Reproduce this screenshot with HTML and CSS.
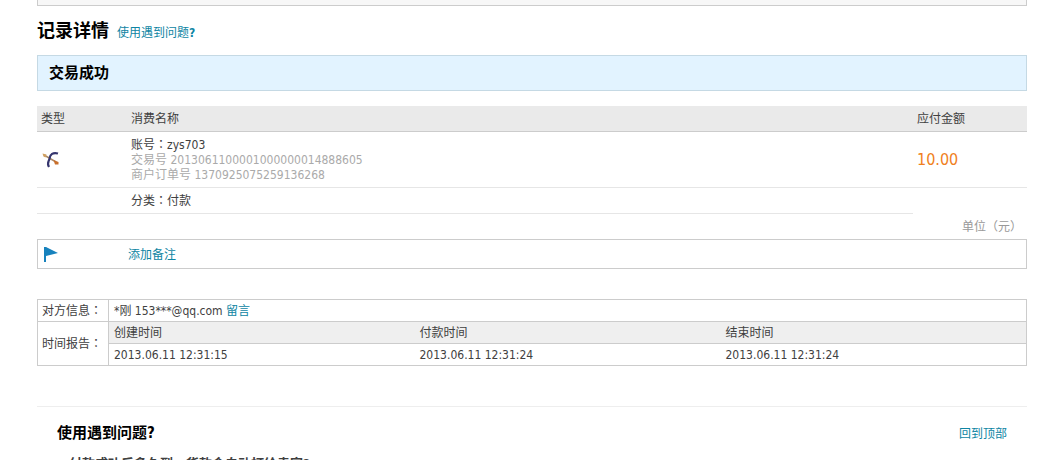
FILE: index.html
```html
<!DOCTYPE html>
<html lang="zh-CN">
<head>
    <meta charset="UTF-8">
    <meta name="viewport" content="width=device-width, initial-scale=1.0">
    <title>记录详情</title>
    <link rel="stylesheet" href="styles.css">
</head>
<body>

    <div class="container" id="top">
        <div class="top-bar"></div>

        <div class="title">
            <h1>记录详情</h1>
            <a href="#help">使用遇到问题<b>?</b></a>
        </div>

        <h2 class="status">交易成功</h2>

        <table class="detail">
            <thead>
                <tr>
                    <th class="col-type">类型</th>
                    <th>消费名称</th>
                    <th class="col-amount">应付金额</th>
                </tr>
            </thead>
            <tbody>
                <tr class="item">
                    <td>
                        <svg class="icon-type" width="20" height="20" viewBox="0 0 20 20">
                            <path d="M3 4l12 7" stroke="#a98a6a" stroke-width="1.500"/>
                            <path d="M1.500 2.500l4 1-1 3-2-1z" fill="#d0a060"/>
                            <path d="M12.500 9l5 2v2.500h-3.500z" fill="#c9702c"/>
                            <path d="M17 2.500C12 1 9 3.500 8.500 7.500 8 10.500 5.500 12 8 16" fill="none" stroke="#35356e" stroke-width="2.200"/>
                        </svg>
                    </td>
                    <td>
                        <p>账号<span class="colon" lang="zh-TW">：</span>zys703</p>
                        <p class="gray">交易号 2013061100001000000014888605</p>
                        <p class="gray">商户订单号 1370925075259136268</p>
                    </td>
                    <td class="amount">10.00</td>
                </tr>
                <tr class="category">
                    <td></td>
                    <td>分类<span class="colon" lang="zh-TW">：</span>付款</td>
                    <td class="blank"></td>
                </tr>
            </tbody>
        </table>
        <p class="unit">单位<span class="colon" lang="zh-TW">（</span>元<span class="colon" lang="zh-TW">）</span></p>

        <div class="memo">
            <svg width="14" height="16" viewBox="0 0 14 16">
                <path d="M0 1h2l12 6-12 3v6H0z" fill="#1782bd"/>
            </svg>
            <a href="#memo">添加备注</a>
        </div>

        <table class="info">
            <tr>
                <th class="label">对方信息<span class="colon" lang="zh-TW">：</span></th>
                <td colspan="3">*刚 153***@qq.com <a href="#message">留言</a></td>
            </tr>
            <tr class="time-head">
                <th class="label" rowspan="2">时间报告<span class="colon" lang="zh-TW">：</span></th>
                <th>创建时间</th>
                <th>付款时间</th>
                <th>结束时间</th>
            </tr>
            <tr>
                <td>2013.06.11 12:31:15</td>
                <td>2013.06.11 12:31:24</td>
                <td>2013.06.11 12:31:24</td>
            </tr>
        </table>

        <div class="help" id="help">
            <div class="help-head">
                <h2>使用遇到问题?</h2>
                <a href="#top">回到顶部</a>
            </div>
            <h3>付款成功后多久到，货款会自动打给卖家?</h3>
        </div>
    </div>

</body>
</html>
```
FILE: styles.css
```css
body {
    margin: 0;
    font-family: "DejaVu Sans Condensed", "Noto Sans CJK SC", sans-serif;
    font-size: 12px;
    line-height: 15px;
    color: #404040;
    background: #fff;
}
h1, h2, h3, p {
    margin: 0;
}
a {
    color: #0e85a3;
    text-decoration: none;
}
table {
    width: 100%;
    border-collapse: collapse;
    table-layout: fixed;
}
th {
    font-weight: normal;
    text-align: left;
}
/* full-width punctuation centred in its box */
.colon {
    font-family: "Noto Sans CJK TC", sans-serif;
    line-height: 1;
}
.container {
    margin: 0 34px 0 37px;
}
.top-bar {
    height: 5px;
    background: #f7f7f7;
    border: 1px solid #ccc;
    border-top: none;
}
.title {
    display: flex;
    align-items: center;
    gap: 8px;
    height: 49px;
}
.title h1 {
    font-size: 18px;
    line-height: 24px;
    color: #000;
}
.title a {
    padding-top: 6px;
}
.status {
    padding: 7px 11px;
    border: 1px solid #c5d9e4;
    background: #e2f3ff;
    font-size: 15px;
    line-height: 20px;
    color: #000;
}
.detail {
    margin-top: 15px;
}
.detail th {
    height: 23px;
    padding: 2px 4px 0;
    background: #eaeaea;
    border-bottom: 1px solid #ccc;
}
.detail td {
    padding: 6px 4px 4px;
    border-bottom: 1px solid #e6e6e6;
}
.detail .col-type {
    width: 82px;
}
.detail .col-amount {
    width: 106px;
}
.detail .blank {
    border-bottom: none;
}
.icon-type {
    display: block;
}
.gray {
    color: #aaa;
}
.detail .amount {
    padding: 5px 4px;
    font-size: 16px;
    color: #f08020;
}
.unit {
    padding: 6px 5px 4px 0;
    text-align: right;
    color: #999;
}
.memo {
    display: flex;
    align-items: center;
    gap: 70px;
    height: 28px;
    padding-left: 6px;
    border: 1px solid #ccc;
}
.memo a {
    padding-top: 2px;
}
.info {
    margin-top: 30px;
    border: 1px solid #ccc;
}
.info th, .info td {
    height: 20px;
    padding: 1px 5px 0;
    border-top: 1px solid #ccc;
    border-bottom: 1px solid #ccc;
}
.info .label {
    width: 62px;
    padding: 1px 4px 0;
    border-right: 1px solid #ccc;
}
.time-head th {
    background: #efefef;
}
.time-head .label {
    background: #fff;
}
.help {
    margin-top: 40px;
    padding: 16px 20px 0;
    border-top: 1px solid #eee;
}
.help-head {
    display: flex;
    align-items: center;
    justify-content: space-between;
}
.help-head a {
    padding-top: 2px;
}
.help h2 {
    font-size: 15px;
    line-height: 20px;
    color: #000;
}
.help h3 {
    margin-top: 13px;
    padding-left: 12px;
    font-size: 13px;
    line-height: 16px;
}
```
